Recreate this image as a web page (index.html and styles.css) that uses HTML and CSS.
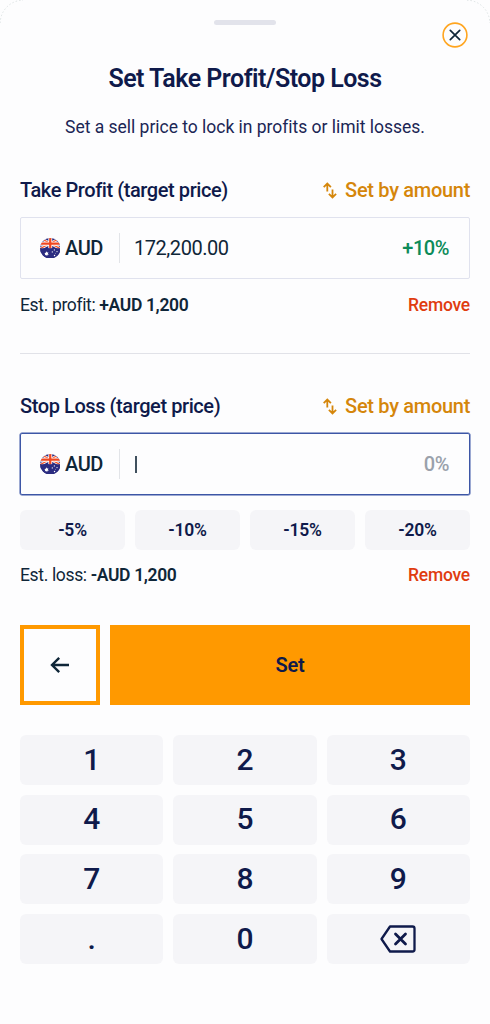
FILE: index.html
```html
<!DOCTYPE html>
<html lang="en">
<head>
<meta charset="utf-8">
<title>Set Take Profit/Stop Loss</title>
<link rel="stylesheet" href="styles.css">
</head>
<body>
<svg class="defs" aria-hidden="true">
  <defs>
    <clipPath id="round"><circle cx="10" cy="10" r="10"/></clipPath>
    <symbol id="flag" viewBox="0 0 20 20">
      <g clip-path="url(#round)">
        <path fill="#2b2c80" d="M0 0h20v20H0z"/>
        <path stroke="#fff" stroke-width="2.6" d="M0 0l20 10.500M20 0L0 10.500"/>
        <path stroke="#f0562b" stroke-width="1.300" d="M0 0l20 10.500M20 0L0 10.500"/>
        <path stroke="#fff" stroke-width="3.8" d="M10 0v10M0 5.600h20"/>
        <path stroke="#f0461f" stroke-width="2.200" d="M10 0v10M0 5.600h20"/>
        <path fill="#2b2c80" d="M0 10h8.100v10H0zM11.900 10H20v10h-8.100zM8 10.300h4V20H8z"/>
        <path fill="#fff" d="M6.300 13l.6 1.200 1.300-.2-.5 1.200.9 1-1.300.2-.4 1.200-.9-1-1.300.3.4-1.300-.8-1 1.400-.2z"/>
        <g fill="#fff"><circle cx="14" cy="11.600" r=".6"/><circle cx="12" cy="13.600" r=".6"/><circle cx="16.600" cy="13.200" r=".6"/><circle cx="14.200" cy="17" r=".7"/><circle cx="15" cy="14.800" r=".4"/></g>
      </g>
    </symbol>
    <symbol id="swap" viewBox="0 0 14 17">
      <path fill="none" stroke="currentColor" stroke-width="1.800" d="M4.300 9.500V1.800M.7 5.200l3.600-3.600 3.600 3.600M9.500 7.500v7.700M5.900 11.800l3.600 3.600 3.600-3.600"/>
    </symbol>
  </defs>
</svg>
<main class="sheet">
  <svg class="corners" width="490" height="24" viewBox="0 0 490 24" fill="none" stroke="#bfcaca" stroke-width=".5" stroke-dasharray="1.500 2"><path d="M.2 23A23 23 0 0 1 23 .2M467 .2A23 23 0 0 1 489.800 23"/></svg>
  <div class="handle"></div>
  <button class="close" aria-label="Close">
    <svg width="26" height="26" viewBox="0 0 26 26" fill="none"><circle cx="13" cy="13" r="11.900" stroke="#ffa51f" stroke-width="1.600"/><path d="M8.300 8.300l9.400 9.400M17.700 8.300l-9.400 9.400" stroke="#0f2638" stroke-width="1.700" stroke-linecap="round"/></svg>
  </button>
  <h1 class="title">Set Take Profit/Stop Loss</h1>
  <p class="subtitle">Set a sell price to lock in profits or limit losses.</p>

  <section class="order">
    <div class="row label-row"><h2 class="label">Take Profit (target price)</h2><span class="switch"><svg class="swap"><use href="#swap"/></svg>Set by amount</span></div>
    <div class="field"><svg class="flag"><use href="#flag"/></svg><span class="currency">AUD</span><span class="separator"></span><span class="value">172,200.00</span><span class="percent gain">+10%</span></div>
    <div class="row estimate"><span>Est. profit: <b>+AUD 1,200</b></span><span class="remove">Remove</span></div>
  </section>

  <div class="divider"></div>

  <section class="order">
    <div class="row label-row"><h2 class="label">Stop Loss (target price)</h2><span class="switch"><svg class="swap"><use href="#swap"/></svg>Set by amount</span></div>
    <div class="field active"><svg class="flag"><use href="#flag"/></svg><span class="currency">AUD</span><span class="separator"></span><span class="caret"></span><span class="percent">0%</span></div>
    <div class="chips"><button class="chip">-5%</button><button class="chip">-10%</button><button class="chip">-15%</button><button class="chip">-20%</button></div>
    <div class="row estimate loss"><span>Est. loss: <b>-AUD 1,200</b></span><span class="remove">Remove</span></div>
  </section>

  <div class="actions">
    <button class="back" aria-label="Back"><svg width="20" height="18" viewBox="0 0 20 18" fill="none" stroke="#0f2638" stroke-width="2.400"><path d="M19 9H2.500M9.200 1.800L2 9l7.200 7.200"/></svg></button>
    <button class="set">Set</button>
  </div>

  <div class="keypad">
    <button class="key">1</button><button class="key">2</button><button class="key">3</button>
    <button class="key">4</button><button class="key">5</button><button class="key">6</button>
    <button class="key">7</button><button class="key">8</button><button class="key">9</button>
    <button class="key">.</button><button class="key">0</button>
    <button class="key delete" aria-label="Delete"><svg width="36" height="28" viewBox="0 0 36 28" fill="none" stroke="#0f1a4b" stroke-width="2.300" stroke-linejoin="round" stroke-linecap="round"><path d="M10 1.500h22.500a2 2 0 0 1 2 2v21a2 2 0 0 1-2 2H10L1.500 14z"/><path stroke-width="2.800" d="M15.500 9l10 10M25.500 9l-10 10"/></svg></button>
  </div>
</main>
</body>
</html>
```
FILE: styles.css
```css
* { box-sizing: border-box; }
body { margin: 0; background: #fdfdfe; font-family: Roboto, "Liberation Sans", sans-serif; color: #0f2638; }
button { font-family: inherit; border: 0; margin: 0; padding: 0; background: none; }
.defs { position: absolute; width: 0; height: 0; }
.sheet { position: relative; width: 490px; height: 1024px; padding: 20px 20px 0; background: #fdfdfe; display: flex; flex-direction: column; }
.corners { position: absolute; top: 0; left: 0; }
.handle { width: 62px; height: 5px; border-radius: 3px; background: #e2e3eb; align-self: center; }
.close { position: absolute; top: 22px; right: 22px; width: 26px; height: 26px; }
.close svg { display: block; }
.title { margin: 38px 0 0; font-size: 25px; line-height: 32px; font-weight: 600; letter-spacing: -0.5px; text-align: center; color: #0f1a4b; }
.subtitle { margin: 20px 0 0; font-size: 17.500px; line-height: 24px; letter-spacing: -0.020px; text-align: center; color: #1b2655; }
.row { display: flex; justify-content: space-between; align-items: center; }
.label-row { height: 24px; }
.subtitle + .order { margin-top: 39px; }
.label { margin: 0; font-size: 20px; font-weight: 500; letter-spacing: -0.420px; color: #0f1a4b; }
.switch { display: flex; align-items: center; font-size: 20px; font-weight: 500; letter-spacing: -0.300px; color: #d5860b; }
.swap { width: 14px; height: 17px; margin-right: 8px; }
.field { margin-top: 15px; height: 62px; border: 1px solid #e0e2ee; border-radius: 2px; padding: 0 20px 0 18.500px; display: flex; align-items: center; font-size: 20px; letter-spacing: -0.450px; }
.field.active { border-color: #3d56a6; box-shadow: 0 0 0 0.500px #3d56a6; }
.flag { width: 20.500px; height: 20.500px; margin-right: 5px; }
.currency { font-weight: 500; width: 54px; }
.separator { width: 1px; height: 30px; background: #e2e4e8; margin-right: 14px; }
.caret { width: 2px; height: 17px; background: #40505e; margin-left: 1px; margin-top: 1px; }
.percent { margin-left: auto; color: #9aa1ab; font-weight: 500; }
.gain { color: #0c8b59; }
.estimate { margin-top: 14px; height: 24px; font-size: 17.500px; letter-spacing: -0.350px; }
.estimate b { font-weight: 600; }
.remove { font-weight: 500; color: #e03c10; letter-spacing: -0.250px; }
.divider { height: 1px; background: #e1e2e8; margin: 36px 0 40px; }
.chips { display: grid; grid-template-columns: repeat(4, 1fr); gap: 10px; margin-top: 15px; }
.chip { height: 40px; border-radius: 6px; background: #f5f5f8; font-size: 17.500px; font-weight: 600; letter-spacing: -0.200px; color: #0f1a4b; }
.estimate.loss { margin-top: 13px; }
.actions { display: flex; gap: 10px; margin-top: 38px; height: 80px; }
.back { width: 80px; border: 4px solid #ff9900; display: flex; align-items: center; justify-content: center; }
.set { flex: 1; background: #ff9900; font-size: 20px; font-weight: 600; letter-spacing: -0.300px; color: #0f1a4b; }
.keypad { display: grid; grid-template-columns: repeat(3, 1fr); grid-auto-rows: 50px; gap: 9.700px 10px; margin-top: 30px; }
.key { border-radius: 6px; background: #f5f5f8; font-size: 30px; font-weight: 500; color: #0f1a4b; display: flex; align-items: center; justify-content: center; padding-bottom: 2px; }
.key.delete { padding-bottom: 0; }
```
